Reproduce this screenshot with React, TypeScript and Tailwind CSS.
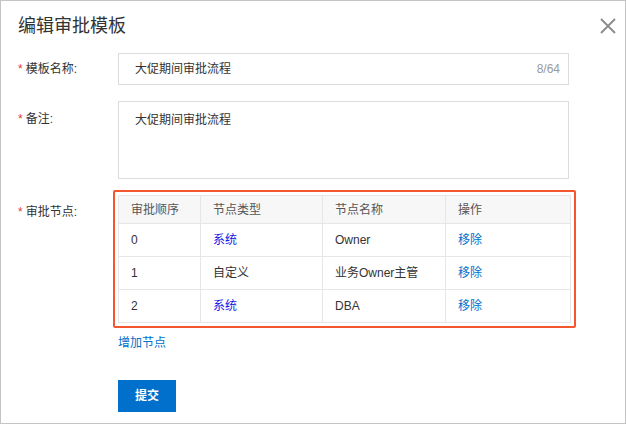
export default function App() {
  const rows = [
    { o: "0", t: "系统", sys: true, n: "Owner" },
    { o: "1", t: "自定义", sys: false, n: "业务Owner主管" },
    { o: "2", t: "系统", sys: true, n: "DBA" },
  ];
  const font = { fontFamily: '"Liberation Sans", "Noto Sans CJK SC", sans-serif' };
  return (
    <div style={font} className="w-[626px] h-[424px] bg-white border border-[#c4c4c4] relative text-[12px] text-[#333]">
      <div className="pl-[17px] pt-[12px] text-[18px] text-[#333] leading-[26px]">编辑审批模板</div>
      <svg className="absolute right-[8px] top-[16px]" width="18" height="18" viewBox="0 0 18 18">
        <path d="M2 2L16 16M16 2L2 16" stroke="#8a8a8a" strokeWidth="1.8" />
      </svg>
      <div className="mt-[14px] flex items-center">
        <div className="w-[117px] pl-[17px]"><span className="text-[#e4393c] mr-[3px]">*</span>模板名称:</div>
        <div className="w-[451px] h-[32px] border border-[#dcdcdc] flex items-center justify-between pl-[16px] pr-[8px] text-[#333]">
          <span>大促期间审批流程</span><span className="text-[#999]">8/64</span>
        </div>
      </div>
      <div className="mt-[16px] flex items-start">
        <div className="w-[117px] pl-[17px] pt-[9px]"><span className="text-[#e4393c] mr-[3px]">*</span>备注:</div>
        <div className="w-[451px] h-[78px] border border-[#dcdcdc] pl-[16px] pt-[9px]">大促期间审批流程</div>
      </div>
      <div className="mt-[11px] flex items-start">
        <div className="w-[112px] pl-[17px] pt-[13px]"><span className="text-[#e4393c] mr-[3px]">*</span>审批节点:</div>
        <div>
          <div className="border-[2px] border-[#f5552f] rounded-[2px] p-[3px] w-[463px]">
            <div className="border border-[#e6e6e6]">
              <div className="grid grid-cols-[82px_122px_123px_1fr] h-[27px] bg-[#f7f7f7] text-[#555]">
                <div className="px-[12px] flex items-center border-r border-[#e6e6e6]">审批顺序</div>
                <div className="px-[12px] flex items-center border-r border-[#e6e6e6]">节点类型</div>
                <div className="px-[12px] flex items-center border-r border-[#e6e6e6]">节点名称</div>
                <div className="px-[12px] flex items-center">操作</div>
              </div>
              {rows.map((r) => (
                <div key={r.o} className="grid grid-cols-[82px_122px_123px_1fr] h-[33px] border-t border-[#e6e6e6]">
                  <div className="px-[12px] flex items-center border-r border-[#e6e6e6]">{r.o}</div>
                  <div className={"px-[12px] flex items-center border-r border-[#e6e6e6] " + (r.sys ? "text-[#1515e8]" : "")}>{r.t}</div>
                  <div className="px-[12px] flex items-center border-r border-[#e6e6e6]">{r.n}</div>
                  <div className="px-[12px] flex items-center text-[#0070cc]">移除</div>
                </div>
              ))}
            </div>
          </div>
          <div className="ml-[5px] mt-[6px] text-[#0070cc]">增加节点</div>
          <button className="ml-[5px] mt-[28px] w-[58px] h-[32px] bg-[#0070cc] text-white font-bold text-[12px]">提交</button>
        </div>
      </div>
    </div>
  );
}
